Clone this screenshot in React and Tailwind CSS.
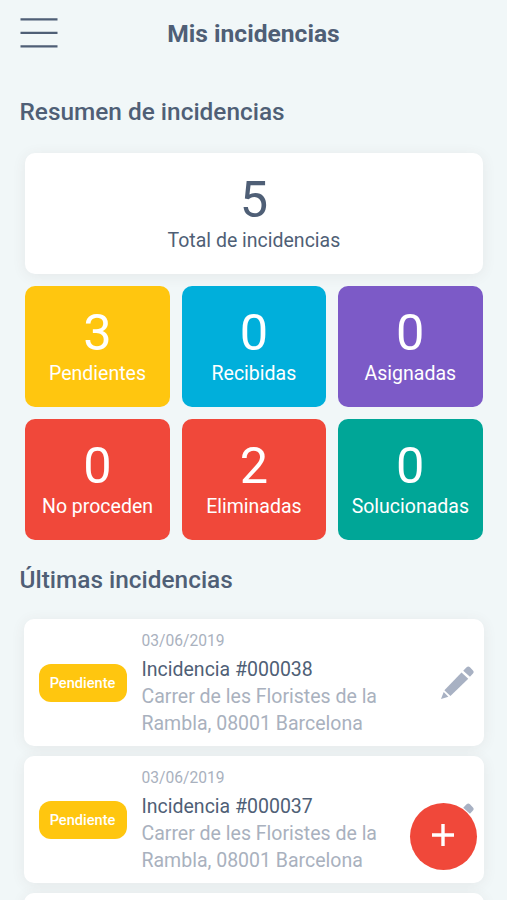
import React, { useState } from 'react';

const stats = [
    { label: 'Pendientes', value: 3, color: 'bg-[#ffc60f]' },
    { label: 'Recibidas', value: 0, color: 'bg-[#00afdb]' },
    { label: 'Asignadas', value: 0, color: 'bg-[#7c5ac7]' },
    { label: 'No proceden', value: 0, color: 'bg-[#f0483a]' },
    { label: 'Eliminadas', value: 2, color: 'bg-[#f0483a]' },
    { label: 'Solucionadas', value: 0, color: 'bg-[#00a697]' }
];

const initialIncidents = [
    { id: '000038', date: '03/06/2019', status: 'Pendiente', address: 'Carrer de les Floristes de la Rambla, 08001 Barcelona' },
    { id: '000037', date: '03/06/2019', status: 'Pendiente', address: 'Carrer de les Floristes de la Rambla, 08001 Barcelona' },
    { id: '000036', date: '', status: '', address: '' }
];

const MenuIcon = () => (
    <svg viewBox="0 0 38 30" className="h-[30px] w-[38px]" stroke="#4f5f76" strokeWidth="2.3" aria-hidden="true">
        <path d="M.5 1.4h37M.5 14.9h37M.5 28.4h37" />
    </svg>
);

const PencilIcon = () => (
    <svg viewBox="0 0 98 98" className="h-[33px] w-[33px]" fill="#a8b1c3" aria-hidden="true">
        <path d="M8 77 L22 91 L0 98 Z" />
        <path d="M61 19 L81 38 L28 89 L10 72 Z" />
        <path d="M66 14 L76 4 Q81 -1 86 4 L95 13 Q99 18 95 22 L86 32 Z" />
    </svg>
);

const StatCard = ({ value, label, className }) => (
    <div className={`h-[121px] rounded-[10px] pt-5 text-center ${className}`}>
        <p className="text-[50.5px] leading-[54px]">{value}</p>
        <p className="text-[19.5px] leading-7">{label}</p>
    </div>
);

const IncidentRow = ({ incident }) => (
    <li className="flex h-[127px] items-center rounded-[10px] bg-white pr-[9.5px] pl-[15px] shadow-[0_2px_14px_rgba(90,70,60,0.08)]">
        {incident.status && (
            <>
                <span className="flex h-[38px] w-[88px] shrink-0 items-center justify-center rounded-xl bg-[#ffc60f] pt-0.5 text-[14.6px] font-medium text-white">
                    {incident.status}
                </span>
                <div className="ml-[15px] flex-1 text-[19.5px] leading-[27px] text-[#a9b1be]">
                    <p className="text-[15.6px] leading-[25px]">{incident.date}</p>
                    <p className="pt-0.5 text-[#4f5f76]">Incidencia #{incident.id}</p>
                    <p className="w-[260px]">{incident.address}</p>
                </div>
                <button type="button" aria-label="Editar">
                    <PencilIcon />
                </button>
            </>
        )}
    </li>
);

const App = () => {
    const [incidents] = useState(initialIncidents);

    return (
        <div className="relative h-[900px] w-full overflow-hidden bg-[#f1f7f8] font-['Roboto',sans-serif] text-[#4f5f76]">
            <header className="grid h-[68px] grid-cols-[1fr_auto_1fr] items-center px-5">
                <button type="button" aria-label="Menú" className="mb-[3px] w-[38px]">
                    <MenuIcon />
                </button>
                <h1 className="pt-px text-[24.6px] font-bold">Mis incidencias</h1>
            </header>

            <main>
                <h2 className="mt-7 px-[19.5px] text-[24.4px] leading-8 font-medium">Resumen de incidencias</h2>
                <section className="mt-[24.5px] flex flex-col gap-3 pr-[24.5px] pl-[25.3px]">
                    <StatCard
                        value={5}
                        label="Total de incidencias"
                        className="bg-white shadow-[0_2px_14px_rgba(90,70,60,0.08)]"
                    />
                    <div className="grid grid-cols-3 gap-3">
                        {stats.map((stat) => (
                            <StatCard
                                key={stat.label}
                                value={stat.value}
                                label={stat.label}
                                className={`text-white ${stat.color}`}
                            />
                        ))}
                    </div>
                </section>

                <h2 className="mt-6 px-[19.5px] text-[24.4px] leading-8 font-medium">Últimas incidencias</h2>
                <ul className="mt-[23.5px] flex flex-col gap-2.5 px-[23.5px]">
                    {incidents.map((incident) => (
                        <IncidentRow key={incident.id} incident={incident} />
                    ))}
                </ul>
            </main>

            <button
                type="button"
                aria-label="Añadir incidencia"
                className="absolute top-[803px] left-[410px] flex h-[66.5px] w-[66.5px] items-center justify-center rounded-full bg-[#f0483a]"
            >
                <svg viewBox="0 0 24 24" className="mb-0.5 h-6 w-6" stroke="white" strokeWidth="3.4">
                    <path d="M12 1v22M1 12h22" />
                </svg>
            </button>
        </div>
    );
};

export default App;
